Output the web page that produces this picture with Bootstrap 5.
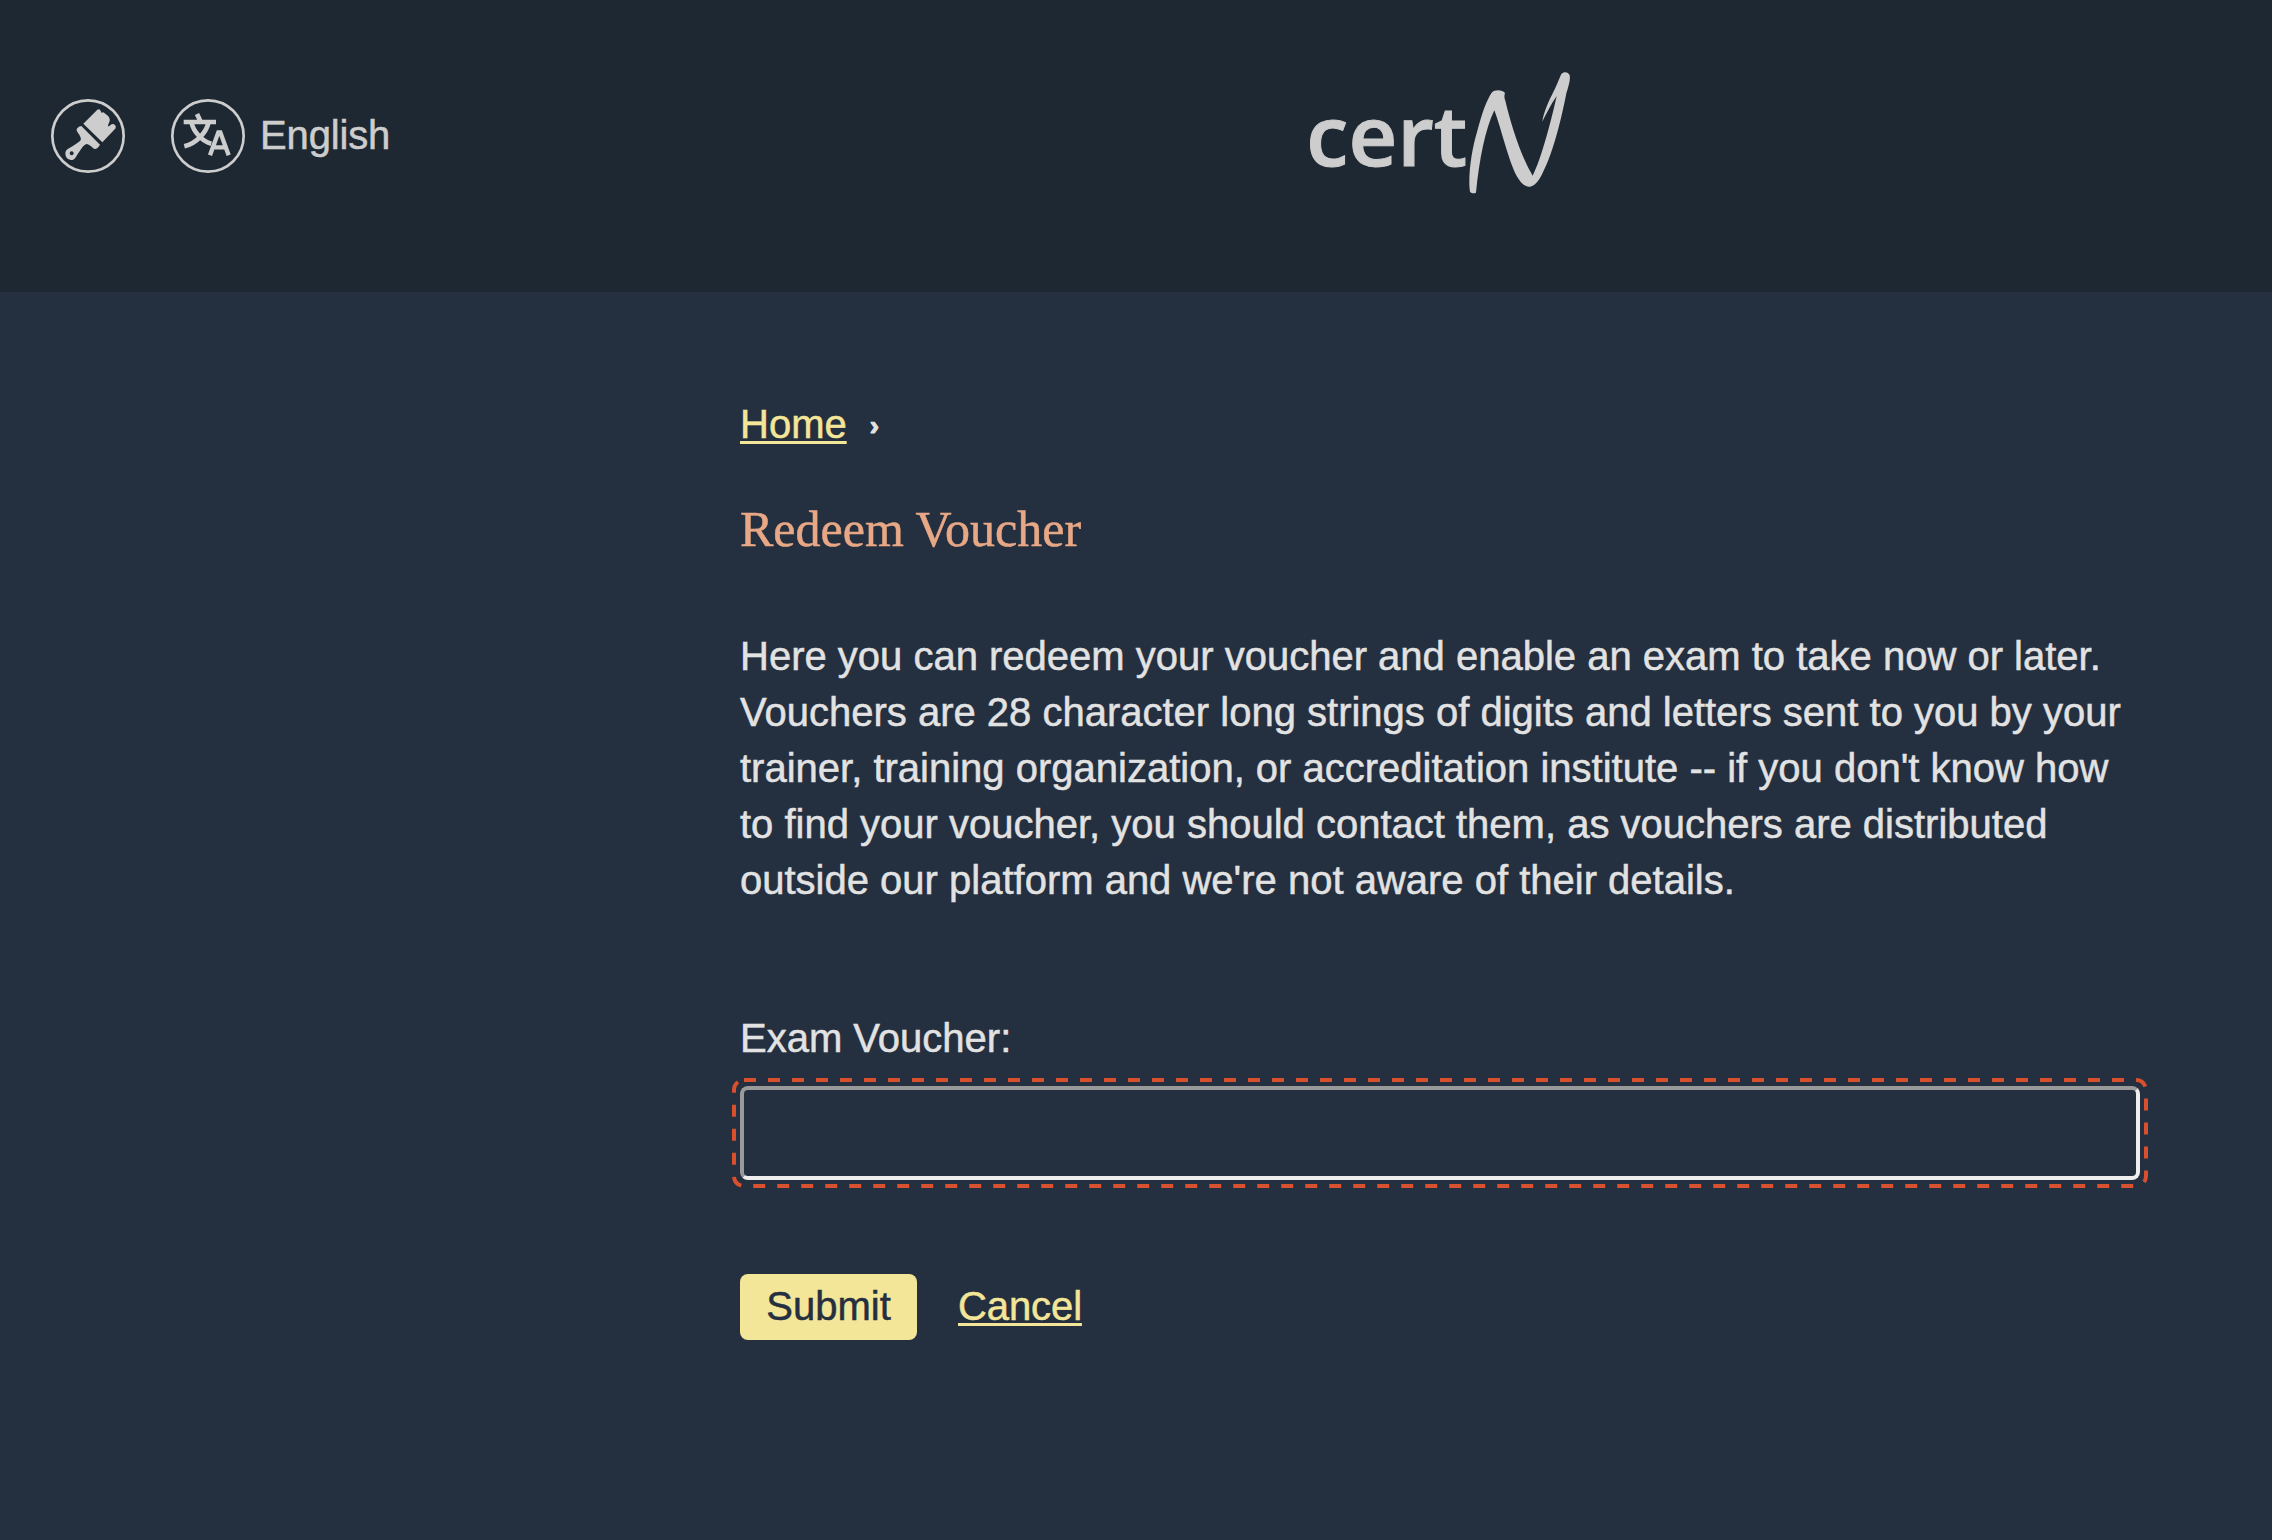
<!DOCTYPE html>
<html lang="en">
<head>
<meta charset="utf-8">
<meta name="viewport" content="width=device-width, initial-scale=1">
<title>Redeem Voucher</title>
<link href="https://cdn.jsdelivr.net/npm/bootstrap@5.3.0/dist/css/bootstrap.min.css" rel="stylesheet">
<style>
  body { background: #242f3f; color: #e2e2e2; font: 40px/56px "Liberation Sans", Arial, sans-serif; min-height: 100vh; -webkit-text-stroke: .5px; }
  a { color: #f4e698; text-decoration-thickness: 3px; text-underline-offset: 3px; text-decoration-skip-ink: none; }
  a:hover { color: #fff3ad; }
  .site-header { background: #1e2833; color: #cdcdcd; height: 292px; }
  .side-col { width: 740px; }
  .main-col { width: 1400px; }
  .tools { padding: 99px 0 0 51px; }
  .tool-btn { color: inherit; gap: 15px; font-size: 40px; line-height: 56px; }
  .tool-btn svg { width: 74px; height: 74px; display: block; }
  .tool-btn span { padding-bottom: 2px; letter-spacing: -.15px; }
  .second-tool { margin-left: 46px; }
  .brand { padding-top: 50px; }
  .brand svg { width: 300px; height: 160px; display: block; }
  .page-body { padding-top: 104px; margin-left: 740px; }
  .crumb-sep { margin: 2px 0 -2px 23px; font-size: 28px; font-weight: bold; -webkit-text-stroke: 1px; }
  h1 { font: 50px/60px "Liberation Serif", "Times New Roman", serif; color: #e8a886; margin: 47px 0 69px; }
  .intro { margin-bottom: 102px; }
  .voucher-label { margin-bottom: 20px; }
  .form-control.voucher-input, .form-control.voucher-input:focus {
    height: 94px; background: #242f3f; color: #e2e2e2; font-size: 40px; box-shadow: none;
    border: 4px solid; border-color: #9a9a9a #eee #eee #9a9a9a; border-radius: 8px;
  }
  .focus-frame { top: -8px; left: -8px; width: 1416px; height: 110px; pointer-events: none; }
  .actions { margin-top: 94px; gap: 41px; }
  .actions a { margin-bottom: 2px; letter-spacing: -.1px; }
  .submit-btn, .submit-btn:hover { background: #f4e698; color: #242f3f; border: 0; border-radius: 8px; font-size: 40px; line-height: 56px; height: 66px; width: 177px; padding: 4px 0 6px; }
</style>
<script src="https://cdn.jsdelivr.net/npm/bootstrap@5.3.0/dist/js/bootstrap.bundle.min.js"></script>
</head>
<body>
<header class="site-header d-flex align-items-start">
  <div class="side-col tools d-flex align-items-center flex-shrink-0">
    <button class="tool-btn btn p-0 border-0" aria-label="Theme">
      <svg viewBox="33 56 222 222" fill="#cdcdcd">
        <circle cx="144" cy="167" r="107" fill="none" stroke="#cdcdcd" stroke-width="8"/>
        <path d="M130 130L172 88Q177 84 182 91L184 97L190 96Q200 103 207 110Q211 118 208 125L205 132Q202 142 209 136Q214 130 220 131Q229 134 227 144L187 186Z"/>
        <path fill-rule="evenodd" d="M110 146Q116 137 124 137L180 193Q172 206 165 206Q160 206 156 200Q147 192 141 191Q134 191 124 205Q112 222 108 229Q103 239 93 239Q76 237 76 219Q76 210 87 204Q115 188 122 180Q124 172 118 163Q109 153 110 146ZM95 213a6 6 0 1 0 .1 0Z"/>
      </svg>
    </button>
    <button class="tool-btn second-tool btn p-0 border-0 d-flex align-items-center">
      <svg viewBox="33 56 222 222" fill="none" stroke="#cdcdcd">
        <circle cx="144" cy="167" r="107" stroke-width="8"/>
        <path stroke-width="14" d="M111 101L121 122M71 125H168M145 129C138 155 112 188 73 198M95 129C101 155 128 184 154 190"/>
        <path stroke-width="13" d="M150 225L175 156H181L206 225M159 201H197"/>
      </svg>
      <span>English</span>
    </button>
  </div>
  <div class="main-col brand d-flex justify-content-center">
    <svg viewBox="0 0 900 480" fill="#cdcdcd" role="img" aria-label="certN">
      <text x="49" y="348" font-family="Open Sans, Noto Sans, sans-serif" font-weight="600" font-size="252" textLength="483" lengthAdjust="spacingAndGlyphs" stroke="#cdcdcd" stroke-width="3">cert</text>
      <path d="M540 425C533 380 545 300 560 250C575 190 590 150 605 128C615 117 637 119 645 129C642 138 643 145 646 152C660 210 688 310 728 377C745 345 773 260 800 138C782 165 767 195 757 215C760 190 775 155 786 134C798 112 808 85 814 72C822 64 835 66 839 76C842 90 835 110 829 130C812 220 785 320 755 375C745 395 730 412 715 410C700 408 690 395 680 378C655 330 635 240 613 181C585 240 568 330 558 428C552 431 545 431 540 425Z"/>
    </svg>
  </div>
</header>
<main class="main-col page-body">
  <nav aria-label="breadcrumb" class="d-flex"><a href="#">Home</a><span class="crumb-sep">›</span></nav>
  <h1>Redeem Voucher</h1>
  <p class="intro">Here you can redeem your voucher and enable an exam to take now or later. Vouchers are 28 character long strings of digits and letters sent to you by your trainer, training organization, or accreditation institute -- if you don't know how to find your voucher, you should contact them, as vouchers are distributed outside our platform and we're not aware of their details.</p>
  <form>
    <label class="voucher-label d-block" for="voucher">Exam Voucher:</label>
    <div class="position-relative">
      <input id="voucher" class="form-control voucher-input" type="text">
      <svg class="focus-frame position-absolute" viewBox="0 0 1416 110" aria-hidden="true">
        <rect x="2" y="2" width="1412" height="106" rx="10" fill="none" stroke="#d8502d" stroke-width="4" stroke-dasharray="12 12"/>
      </svg>
    </div>
    <div class="actions d-flex align-items-center">
      <button type="button" class="btn submit-btn">Submit</button>
      <a href="#">Cancel</a>
    </div>
  </form>
</main>
</body>
</html>
